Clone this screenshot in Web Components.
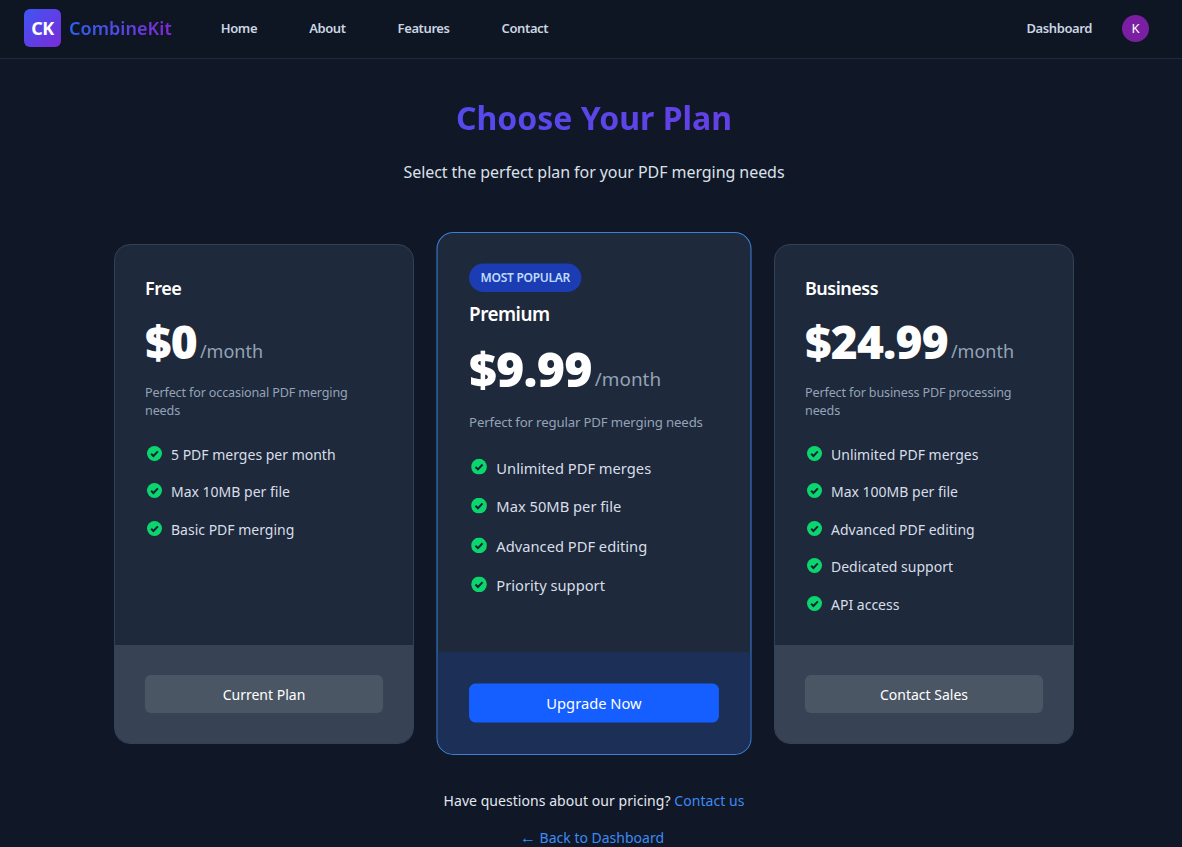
<!DOCTYPE html>
<html lang="en">
<head>
<meta charset="utf-8">
<title>CombineKit - Pricing</title>
<style>
  html, body { margin: 0; height: 847px; overflow: hidden; }
  body {
    background: #101727;
    color: #e2e8f0;
    font-family: "Noto Sans", "Open Sans", sans-serif;
  }
</style>
</head>
<body>
<app-header></app-header>
<pricing-page>
  <plan-card name="Free" price="$0" desc="Perfect for occasional PDF merging needs" action="Current Plan">
    <plan-feature>5 PDF merges per month</plan-feature>
    <plan-feature>Max 10MB per file</plan-feature>
    <plan-feature>Basic PDF merging</plan-feature>
  </plan-card>
  <plan-card popular name="Premium" price="$9.99" desc="Perfect for regular PDF merging needs" action="Upgrade Now">
    <plan-feature>Unlimited PDF merges</plan-feature>
    <plan-feature>Max 50MB per file</plan-feature>
    <plan-feature>Advanced PDF editing</plan-feature>
    <plan-feature>Priority support</plan-feature>
  </plan-card>
  <plan-card name="Business" price="$24.99" desc="Perfect for business PDF processing needs" action="Contact Sales">
    <plan-feature>Unlimited PDF merges</plan-feature>
    <plan-feature>Max 100MB per file</plan-feature>
    <plan-feature>Advanced PDF editing</plan-feature>
    <plan-feature>Dedicated support</plan-feature>
    <plan-feature>API access</plan-feature>
  </plan-card>
</pricing-page>

<script>
class AppHeader extends HTMLElement {
  constructor() {
    super();
    this.attachShadow({ mode: 'open' });
    this.shadowRoot.innerHTML = `
      <style>
        :host {
          display: flex;
          align-items: center;
          justify-content: space-between;
          height: 56px;
          padding: 0 33px 2px 24px;
          background: #0e1624;
          border-bottom: 1px solid #1e293b;
        }
        .left, .right, .logo, nav { display: flex; align-items: center; }
        .mark {
          width: 37px;
          height: 38px;
          border-radius: 6px;
          background: linear-gradient(135deg, #3f55f5, #7a2bd8);
          color: #fff;
          font-size: 18px;
          font-weight: 700;
          display: flex;
          align-items: center;
          justify-content: center;
          letter-spacing: -0.5px;
        }
        .brand {
          margin-left: 8px;
          font-size: 18px;
          font-weight: 600;
          letter-spacing: 0.05px;
          background: linear-gradient(90deg, #2b63f5, #8428d4);
          -webkit-background-clip: text;
          background-clip: text;
          color: transparent;
        }
        nav { margin-left: 49px; gap: 52px; }
        a {
          color: #cbd5e1;
          font-size: 13px;
          font-weight: 600;
          letter-spacing: -0.4px;
          text-decoration: none;
        }
        .avatar {
          width: 27px;
          height: 27px;
          margin-left: 30px;
          border-radius: 50%;
          background: #7b1fa2;
          color: #fff;
          font-size: 13px;
          display: flex;
          align-items: center;
          justify-content: center;
        }
      </style>
      <div class="left">
        <div class="logo"><div class="mark">CK</div><span class="brand">CombineKit</span></div>
        <nav><a href="#">Home</a><a href="#">About</a><a href="#">Features</a><a href="#">Contact</a></nav>
      </div>
      <div class="right"><a href="#">Dashboard</a><div class="avatar">K</div></div>
    `;
  }
}

class PricingPage extends HTMLElement {
  constructor() {
    super();
    this.attachShadow({ mode: 'open' });
    this.shadowRoot.innerHTML = `
      <style>
        :host {
          display: block;
          width: 1188px;
          text-align: center;
        }
        h1 {
          margin: 0;
          padding-top: 37px;
          font-size: 32px;
          line-height: 44px;
          font-weight: 700;
          background: linear-gradient(90deg, #3b5cf6, #7c2fdb);
          -webkit-background-clip: text;
          background-clip: text;
          color: transparent;
        }
        .sub {
          margin: 21px 0 0;
          font-size: 16px;
          line-height: 22px;
          letter-spacing: -0.06px;
          color: #dbe1ea;
        }
        .plans {
          display: grid;
          grid-template-columns: repeat(3, 300px);
          gap: 30px;
          justify-content: center;
          margin-top: 61px;
          text-align: left;
        }
        .contact {
          margin: 47px 0 0;
          font-size: 14px;
          line-height: 20px;
          letter-spacing: 0.05px;
          color: #e2e8f0;
        }
        .back { margin: 17px 0 0; padding-right: 4px; font-size: 14px; line-height: 20px; }
        .arrow { font-family: "Liberation Sans", sans-serif; font-size: 16px; line-height: 0; }
        a { color: #3d8bf5; text-decoration: none; }
      </style>
      <h1>Choose Your Plan</h1>
      <p class="sub">Select the perfect plan for your PDF merging needs</p>
      <div class="plans"><slot></slot></div>
      <p class="contact">Have questions about our pricing? <a href="#">Contact us</a></p>
      <p class="back"><a href="#"><span class="arrow">←</span> Back to Dashboard</a></p>
    `;
  }
}

class PlanCard extends HTMLElement {
  constructor() {
    super();
    this.attachShadow({ mode: 'open' });
    this.shadowRoot.innerHTML = `
      <style>
        :host {
          display: flex;
          flex-direction: column;
          height: 500px;
          box-sizing: border-box;
          background: #1e293b;
          border: 1px solid #334155;
          border-radius: 16px;
          overflow: hidden;
        }
        :host([popular]) {
          height: 498px;
          align-self: center;
          transform: translateY(-0.5px) scale(1.05);
          border-color: #3b7fd9;
        }
        .body { flex: 1 1 0; min-height: 0; padding: 30px 30px 0; }
        :host([popular]) .body { padding-top: 29px; }
        .badge {
          display: none;
          width: max-content;
          height: 27px;
          line-height: 27px;
          margin-bottom: 8px;
          padding: 0 11px;
          border-radius: 14px;
          background: #1b3cb3;
          color: #bfdbfe;
          font-size: 11.5px;
          font-weight: 600;
          letter-spacing: -0.3px;
        }
        :host([popular]) .badge { display: block; }
        h3 {
          margin: 0;
          font-size: 18px;
          line-height: 26px;
          font-weight: 600;
          letter-spacing: -0.5px;
          color: #fff;
        }
        .price { margin-top: 12px; line-height: 0; color: #fff; white-space: nowrap; }
        :host([popular]) .price { margin-top: 10.5px; }
        .amount { font-size: 46px; line-height: 56px; font-weight: 900; letter-spacing: -0.8px; }
        .per { margin-left: 3px; font-size: 18px; line-height: 1; color: #94a3b8; vertical-align: 1px; }
        .desc {
          margin: 15px 0 0;
          font-size: 12.6px;
          line-height: 18px;
          letter-spacing: -0.15px;
          color: #94a3b8;
        }
        :host([popular]) .desc { margin-top: 15.5px; }
        .features { margin-top: 23.7px; }
        :host([popular]) .features { margin-top: 22.8px; }
        .foot { padding: 30px; background: #374355; }
        :host([popular]) .foot { background: #1c2f57; }
        button {
          display: block;
          width: 100%;
          height: 38px;
          border: none;
          border-radius: 6px;
          background: #4b5665;
          color: #fff;
          font: inherit;
          font-size: 14px;
          font-weight: 400;
          cursor: pointer;
        }
        :host([popular]) button { height: 37px; background: #155eff; }
      </style>
      <div class="body">
        <div class="badge">MOST POPULAR</div>
        <h3></h3>
        <div class="price"><span class="amount"></span><span class="per">/month</span></div>
        <p class="desc"></p>
        <div class="features"><slot></slot></div>
      </div>
      <div class="foot"><button></button></div>
    `;
  }

  connectedCallback() {
    this.shadowRoot.querySelector('h3').textContent = this.getAttribute('name');
    this.shadowRoot.querySelector('.amount').textContent = this.getAttribute('price');
    this.shadowRoot.querySelector('.desc').textContent = this.getAttribute('desc');
    this.shadowRoot.querySelector('button').textContent = this.getAttribute('action');
  }
}

class PlanFeature extends HTMLElement {
  constructor() {
    super();
    this.attachShadow({ mode: 'open' });
    this.shadowRoot.innerHTML = `
      <style>
        :host {
          display: flex;
          gap: 9px;
          margin-bottom: 15px;
          font-size: 14px;
          line-height: 22.5px;
          color: #d8dee8;
        }
        svg { flex: none; width: 15px; height: 15px; margin: 2px 0 0 2px; }
      </style>
      <svg viewBox="0 0 16 16"><circle cx="8" cy="8" r="8" fill="#0bd66e"/><path d="M4.4 8.2l2.5 2.5 4.7-4.9" fill="none" stroke="#14213a" stroke-width="2.1"/></svg>
      <span><slot></slot></span>
    `;
  }
}

customElements.define('app-header', AppHeader);
customElements.define('pricing-page', PricingPage);
customElements.define('plan-card', PlanCard);
customElements.define('plan-feature', PlanFeature);
</script>
</body>
</html>
